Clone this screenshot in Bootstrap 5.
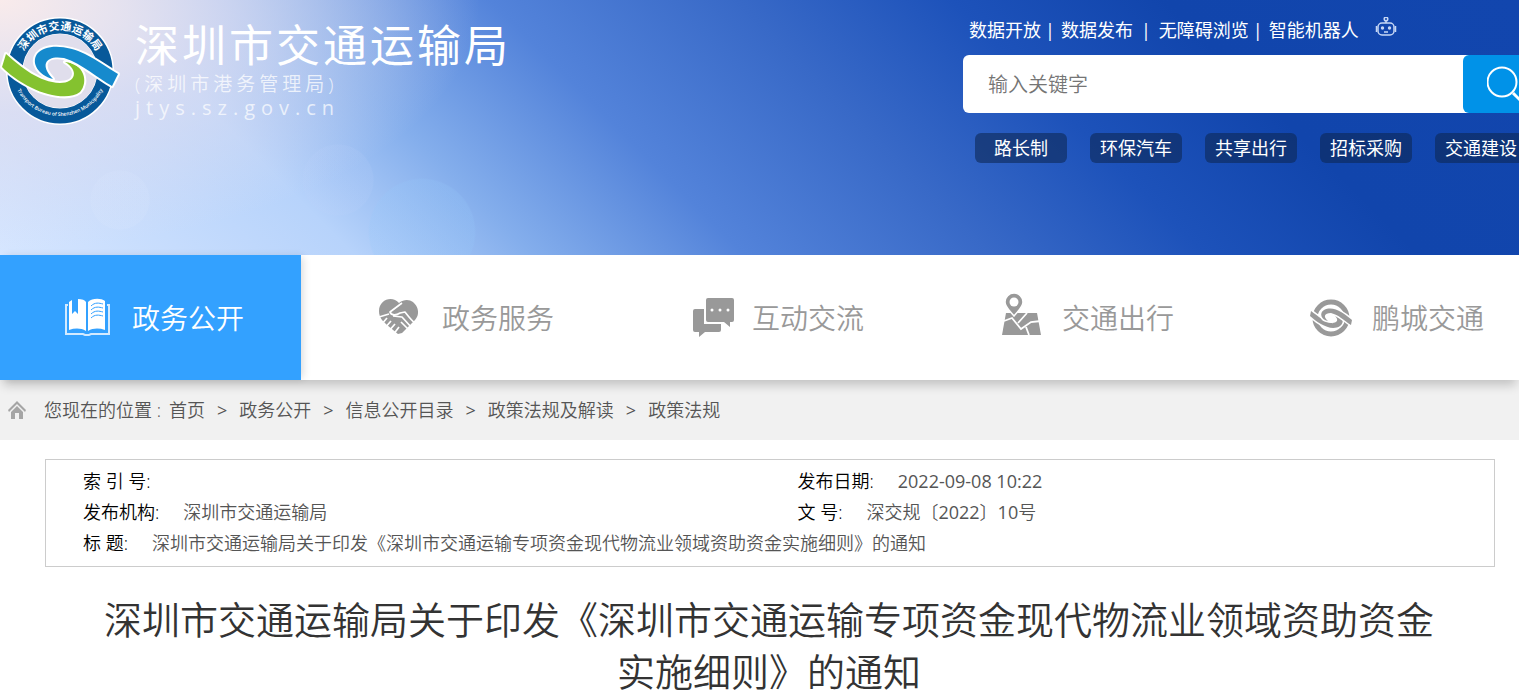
<!DOCTYPE html>
<html lang="zh-CN">
<head>
<meta charset="utf-8">
<meta name="viewport" content="width=device-width, initial-scale=1">
<title>深圳市交通运输局</title>
<link href="https://cdn.jsdelivr.net/npm/bootstrap@5.3.0/dist/css/bootstrap.min.css" rel="stylesheet">
<style>
body{font-family:"Open Sans","Noto Sans CJK SC",sans-serif;font-weight:350;font-size:18px;line-height:26px;color:#555;overflow-x:hidden}
a{color:inherit;text-decoration:none}
.site-head{min-height:255px;padding-top:17px;overflow:hidden;color:#fff;
background:
radial-gradient(circle 54px at 422px 232px,rgba(150,200,250,.22) 97%,transparent),
radial-gradient(circle 36px at 338px 180px,rgba(190,210,250,.14) 97%,transparent),
radial-gradient(circle 30px at 120px 200px,rgba(225,235,255,.12) 97%,transparent),
radial-gradient(ellipse 480px 250px at 0 0,#f9ebeb,rgba(224,222,240,.75) 45%,transparent),
linear-gradient(45deg,#d6e6ff 0,#b7d3fb 20%,#84aeec 30%,#5383da 42%,#3869c7 56%,#1d52ba 68%,#1145ac 80%,#1246ae 100%)}
.brand{margin-left:14px}
.brand-name{font-weight:400;font-size:44px;line-height:56px;letter-spacing:3px}
.brand-sub{font-size:19px;line-height:23px;letter-spacing:4px;opacity:.75}
.brand-url{font-weight:400;font-size:20px;line-height:24px;letter-spacing:6px;opacity:.7}
.tools{width:556px}
.top-links{padding-left:6px;font-weight:400}
.top-links .bar{margin:0 6px 0 4px}
.search-row{margin-top:12px}
.kw{height:58px;width:506px;font-size:20px;font-weight:350;padding:0 25px;border-radius:6px 0 0 6px}
.kw::placeholder{color:#757575}
.go{width:100px;height:58px;margin-left:-6px;background:#0092e8;border-radius:6px}
.quick{gap:23px;padding:20px 0 0 12px;font-weight:400}
.quick a{width:92px;height:30px;line-height:30px;background:rgba(13,40,85,.6);border-radius:6px}
.main-nav{height:125px;gap:9px;font-size:28px;color:#999;box-shadow:0 8px 10px -3px rgba(0,0,0,.2);position:relative}
.main-nav a{flex:0 0 301px;gap:21px;padding-left:6px}
.main-nav a.on{background:#33a1ff;color:#fff;box-shadow:4px 0 8px -2px rgba(0,0,0,.15)}
.main-nav svg{width:48px;height:48px;overflow:visible}
.crumbs{height:60px;background:#f1f1f1;padding-left:8px}
.crumbs .place{margin-left:18px}
.crumbs .sep{margin:0 12px;font-weight:400}
.sheet{margin:19px 24px 0 45px;border:1px solid #ccc;padding:6px 37px 7px}
.sheet th,.sheet td{padding:0;line-height:31px;font-weight:350}
.sheet .first-col{width:52%}
.sheet .tag{color:#000;margin-right:24px}
.sheet .num{font-weight:400}
h1.doc-title{font-weight:350;font-size:38px;line-height:52px;color:#333;margin:26px 84px 0 103px}
</style>
</head>
<body>
<header class="site-head d-flex justify-content-between align-items-start">
  <div class="d-flex">
    <svg width="121" height="110" viewBox="0 1 121 110" role="img" aria-label="徽标">
      <defs><path id="arcTop" d="M19 55A41 41 0 0 1 101 55"/><path id="arcLow" d="M12 52A48 48 0 0 0 108 52"/></defs>
      <circle cx="60" cy="55" r="54" fill="#fff"/>
      <circle cx="60" cy="55" r="45" fill="none" stroke="#07599a" stroke-width="15"/>
      <circle cx="60" cy="55" r="37" fill="#e0deec"/>
      <text font-size="11" font-weight="700" fill="#fff"><textPath href="#arcTop" startOffset="50%" text-anchor="middle">深圳市交通运输局</textPath></text>
      <text font-size="5" font-weight="600" fill="#fff"><textPath href="#arcLow" startOffset="50%" text-anchor="middle">Transport Bureau of Shenzhen Municipality</textPath></text>
      <g stroke="#fff" stroke-width="4" paint-order="stroke" stroke-linejoin="round">
      <path fill="#84c22f" d="M6 38C22 52 39 66 60 67C76 67 79 54 65 46C84 47 89 66 80 76C70 84 48 80 32 72C18 65 9 58 2 51Z"/>
      <path fill="#168acd" d="M53 63C38 59 31 47 37 38C46 27 69 30 85 38C97 44 108 52 118 58L112 70C97 62 83 48 64 42C48 39 38 47 53 63Z"/></g>
    </svg>
    <div class="brand text-nowrap">
      <div class="brand-name">深圳市交通运输局</div>
      <div class="brand-sub">(深圳市港务管理局)</div>
      <div class="brand-url">jtys.sz.gov.cn</div>
    </div>
  </div>
  <div class="tools flex-shrink-0 text-nowrap">
    <div class="top-links d-flex align-items-start">
      <a href="#">数据开放</a><span class="bar">|</span>
      <a href="#">数据发布</a><span class="mx-2">|</span>
      <a href="#">无障碍浏览</a><span class="bar">|</span>
      <a href="#">智能机器人</a>
      <svg class="ms-3" width="22" height="22" viewBox="0 1 22 22" fill="none" stroke="#c6d7f5" stroke-width="1.500"><rect x="3" y="7" width="16" height="12" rx="4"/><circle cx="11" cy="3" r="1.800"/><path d="M11 5v2M1.500 10v6M20.500 10v6M9 16h4"/><g fill="#c6d7f5" stroke="none"><circle cx="7.500" cy="12" r="1.700"/><circle cx="14.500" cy="12" r="1.700"/></g></svg>
    </div>
    <form class="search-row d-flex">
      <input class="kw border-0 flex-shrink-0" type="text" placeholder="输入关键字" aria-label="输入关键字">
      <button class="go border-0 flex-shrink-0 text-start ps-4" type="button" aria-label="搜索"><svg width="38" height="38" viewBox="0 0 38 38" fill="none" stroke="#fff" stroke-width="2"><circle cx="15" cy="17" r="14.500"/><path d="M26 28l9 9" stroke-width="3"/></svg></button>
    </form>
    <div class="quick d-flex text-center">
      <a href="#" class="flex-shrink-0">路长制</a><a href="#" class="flex-shrink-0">环保汽车</a><a href="#" class="flex-shrink-0">共享出行</a><a href="#" class="flex-shrink-0">招标采购</a><a href="#" class="flex-shrink-0">交通建设</a>
    </div>
  </div>
</header>
<nav class="main-nav d-flex bg-white text-nowrap">
  <a href="#" class="on d-flex align-items-center justify-content-center"><svg viewBox="0 0 48 48"><path fill="none" stroke="#d3eaff" stroke-width="2" d="M5 11H3v29h17l2 1h4l2-1h18V11h-2"/><path fill="#fff" d="M6 8l3-2v14l3-3 3 3V5c4 0 7 1 8 3v29c-5-3-11-3-17-1zM25 8c4-4 13-4 17-1v29c-6-2-12-2-17 1z"/><path fill="none" stroke="#33a1ff" d="M28 12c4-4 8-3 12-2M28 16c4-4 8-3 12-2M28 20c4-4 8-3 12-2M28 24c4-4 8-3 12-2"/></svg>政务公开</a>
  <a href="#" class="d-flex align-items-center justify-content-center"><svg viewBox="-2 0 48 48"><path fill="#999" d="M24 9C17 1 4 6 4 17c0 7 4 10 8 14l11 9 4-1 13-13C49 17 37-1 24 9z"/><path fill="none" stroke="#fff" stroke-width="1.700" stroke-linejoin="round" d="M27 9L15 18c1 4 7 3 10 1l5-1c4 5 7 9 10 11M4 23l10-3M18 22l9 1 10 11M26 28l8 8M12 24l-6 7M16 27l-7 8M20 30l-7 8M24 33l-6 8"/></svg>政务服务</a>
  <a href="#" class="d-flex align-items-center justify-content-center"><svg viewBox="-6 0 48 48"><g fill="#999"><path d="M6 15h9v15h17v6a2 2 0 0 1-2 2H16l-6 5v-5H6a2 2 0 0 1-2-2V17a2 2 0 0 1 2-2z"/><path d="M19 4h24a2 2 0 0 1 2 2v20a2 2 0 0 1-2 2h-2v5l-6-5H19a2 2 0 0 1-2-2V6a2 2 0 0 1 2-2z"/></g><g fill="#fff"><circle cx="23" cy="16" r="1.500"/><circle cx="31" cy="16" r="1.500"/><circle cx="39" cy="16" r="1.500"/></g></svg>互动交流</a>
  <a href="#" class="d-flex align-items-center justify-content-center"><svg viewBox="-5 0 48 48"><path fill="#999" d="M8 19h31l4 22H4z"/><path fill="none" stroke="#fff" stroke-width="1.800" d="M6 27l8-3 9 11 10-7 10-1M28 33l3 8M20 29l9-10"/><path fill="#999" stroke="#fff" stroke-width="1.500" d="M16-1a9 9 0 0 1 9 9c0 5-5 9-9 14c-4-5-9-9-9-14a9 9 0 0 1 9-9z"/><circle cx="16" cy="8" r="4.500" fill="#fff"/></svg>交通出行</a>
  <a href="#" class="d-flex align-items-center justify-content-center"><svg viewBox="-4 0 48 48"><circle cx="24" cy="24" r="16" fill="none" stroke="#999" stroke-width="5"/><g fill="#999" stroke="#fff" stroke-width="3" paint-order="stroke"><path d="M4 17c7 5 13 11 21 12c6 0 7-4 2-8c9 1 11 7 6 11c-9 6-22-3-30-10z"/><path d="M21 27c-7-1-9-8-4-11c9-5 20 3 28 10l-1 5c-8-5-12-10-20-12c-7 0-8 4-3 8z"/></g></svg>鹏城交通</a>
</nav>
<div class="crumbs d-flex align-items-center text-nowrap">
  <svg width="18" height="20" viewBox="0 0 18 20" fill="#a5a5a5"><path d="M9 1L0 10l1 2 8-8 8 8 1-2z"/><path d="M9 6l-6 6v7h4v-6h4v6h4v-7z"/></svg>
  <span class="place">您现在的位置 :</span><a href="#" class="ms-2">首页</a><span class="sep">&gt;</span><a href="#">政务公开</a><span class="sep">&gt;</span><a href="#">信息公开目录</a><span class="sep">&gt;</span><a href="#">政策法规及解读</a><span class="sep">&gt;</span><a href="#">政策法规</a>
</div>
<main>
  <div class="sheet">
    <table class="w-100">
      <tbody>
        <tr><td class="first-col"><span class="tag">索 引 号:</span></td><td><span class="tag">发布日期:</span><span class="num">2022-09-08 10:22</span></td></tr>
        <tr><td><span class="tag">发布机构:</span>深圳市交通运输局</td><td><span class="tag">文 号:</span>深交规〔<span class="num">2022</span>〕<span class="num">10</span>号</td></tr>
        <tr><td colspan="2"><span class="tag">标 题:</span>深圳市交通运输局关于印发《深圳市交通运输专项资金现代物流业领域资助资金实施细则》的通知</td></tr>
      </tbody>
    </table>
  </div>
  <h1 class="doc-title text-center">深圳市交通运输局关于印发《深圳市交通运输专项资金现代物流业领域资助资金实施细则》的通知</h1>
</main>
<script src="https://cdn.jsdelivr.net/npm/bootstrap@5.3.0/dist/js/bootstrap.bundle.min.js"></script>
</body>
</html>
